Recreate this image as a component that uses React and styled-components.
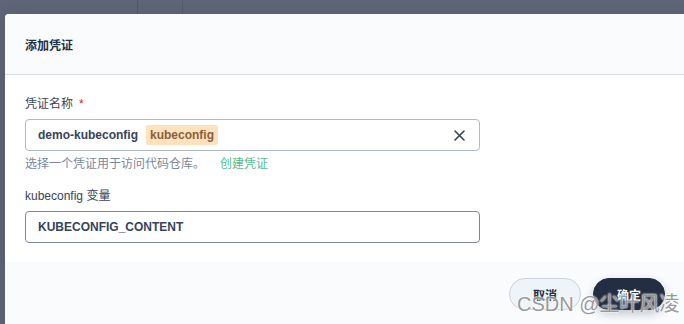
import styled, { createGlobalStyle } from "styled-components";

const GlobalStyle = createGlobalStyle`
  html, body {
    margin: 0;
    padding: 0;
    width: 684px;
    height: 324px;
    overflow: hidden;
  }
  body {
    font-family: "Liberation Sans", "Noto Sans CJK SC", sans-serif;
    background: #5e6577;
  }
`;

const Backdrop = styled.div`
  position: relative;
  width: 684px;
  height: 324px;
  overflow: hidden;
  padding-top: 14px;
  box-sizing: border-box;
  background:
    linear-gradient(to right, transparent 137px, #4f5667 137px, #4f5667 138px, transparent 138px),
    linear-gradient(to right, transparent 182px, #565d6e 182px, #565d6e 183px, transparent 183px),
    #5e6577;
`;

const Modal = styled.div`
  margin-left: 5px;
  width: 699px;
  background: #fff;
  border-radius: 4px 0 0 0;
  overflow: hidden;
  box-shadow: 0 4px 16px rgba(36, 46, 66, 0.2);
`;

const Header = styled.div`
  height: 60px;
  display: flex;
  align-items: center;
  padding: 0 20px;
  background: #f9fbfd;
  border-bottom: 1px solid #d8dee5;
`;

const Title = styled.h3`
  margin: 0;
  font-family: "Noto Sans CJK SC", sans-serif;
  font-size: 12px;
  font-weight: 600;
  color: #242e42;
`;

const Body = styled.div`
  padding: 20px 20px 19px;
  display: flex;
  flex-direction: column;
  gap: 15px;
`;

const Field = styled.div`
  display: flex;
  flex-direction: column;
  width: 455px;
`;

const Label = styled.label`
  font-family: "Liberation Sans", "Noto Sans CJK SC", sans-serif;
  font-size: 12px;
  line-height: 18px;
  color: #36435c;
  margin-bottom: 6px;
`;

const Required = styled.span`
  color: #ca2621;
  margin-left: 6px;
`;

const InputBox = styled.div`
  height: 32px;
  box-sizing: border-box;
  border: 1px solid ${p => p.$border || "#b1b9c5"};
  border-radius: 4px;
  display: flex;
  align-items: center;
  padding: 0 12px;
  gap: 8px;
  background: #fff;
`;

const Value = styled.span`
  font-size: 12px;
  font-weight: 700;
  color: #36435c;
`;

const Tag = styled.span`
  font-size: 12px;
  font-weight: 700;
  color: #8c5f3b;
  background: #fee1bd;
  border-radius: 2px;
  padding: 0 4px;
  line-height: 20px;
`;

const Clear = styled.span`
  margin-left: auto;
  display: flex;
  align-items: center;
  margin-right: 2px;
`;

const Hint = styled.div`
  margin-top: 3px;
  font-family: "Noto Sans CJK SC", sans-serif;
  font-size: 12px;
  line-height: 18px;
  color: #79879c;
  display: flex;
  gap: 15px;
`;

const HintLink = styled.a`
  color: #55bc8a;
  text-decoration: none;
`;

const Footer = styled.div`
  background: #f9fbfd;
  height: 80px;
  padding: 16px 39px 0 0;
  display: flex;
  justify-content: flex-end;
  align-items: flex-start;
  gap: 12px;
`;

const Button = styled.button`
  width: 72px;
  height: 32px;
  border-radius: 17px;
  font-family: "Noto Sans CJK SC", sans-serif;
  font-size: 12px;
  font-weight: 600;
  cursor: pointer;
  border: 1px solid ${p => (p.$primary ? "#242e42" : "#ccd3db")};
  background: ${p => (p.$primary ? "#242e42" : "#eff4f9")};
  color: ${p => (p.$primary ? "#fff" : "#242e42")};
  box-shadow: ${p => (p.$primary ? "0 4px 10px rgba(36, 46, 66, 0.25)" : "none")};
`;

const Watermark = styled.div`
  position: absolute;
  left: 517px;
  top: 288px;
  font-family: "Liberation Sans", "Noto Sans CJK SC", sans-serif;
  font-size: 20px;
  color: rgba(125, 125, 125, 0.8);
  text-shadow: 0 0 2px #fff, 0 0 2px #fff;
  white-space: nowrap;
  pointer-events: none;
`;

const CloseIcon = () => (
  <svg width="11" height="11" viewBox="0 0 11 11">
    <path d="M1 1 L10 10 M10 1 L1 10" stroke="#36435c" strokeWidth="1.6" strokeLinecap="round" />
  </svg>
);

export default function App() {
  return (
    <>
      <GlobalStyle />
      <Backdrop>
        <Modal>
          <Header>
            <Title>添加凭证</Title>
          </Header>
          <Body>
            <Field>
              <Label>
                凭证名称<Required>*</Required>
              </Label>
              <InputBox>
                <Value>demo-kubeconfig</Value>
                <Tag>kubeconfig</Tag>
                <Clear>
                  <CloseIcon />
                </Clear>
              </InputBox>
              <Hint>
                <span>选择一个凭证用于访问代码仓库。</span>
                <HintLink>创建凭证</HintLink>
              </Hint>
            </Field>
            <Field>
              <Label>kubeconfig 变量</Label>
              <InputBox $border="#7f8899">
                <Value>KUBECONFIG_CONTENT</Value>
              </InputBox>
            </Field>
          </Body>
          <Footer>
            <Button>取消</Button>
            <Button $primary>确定</Button>
          </Footer>
        </Modal>
        <Watermark>CSDN @尘叶风凌</Watermark>
      </Backdrop>
    </>
  );
}
